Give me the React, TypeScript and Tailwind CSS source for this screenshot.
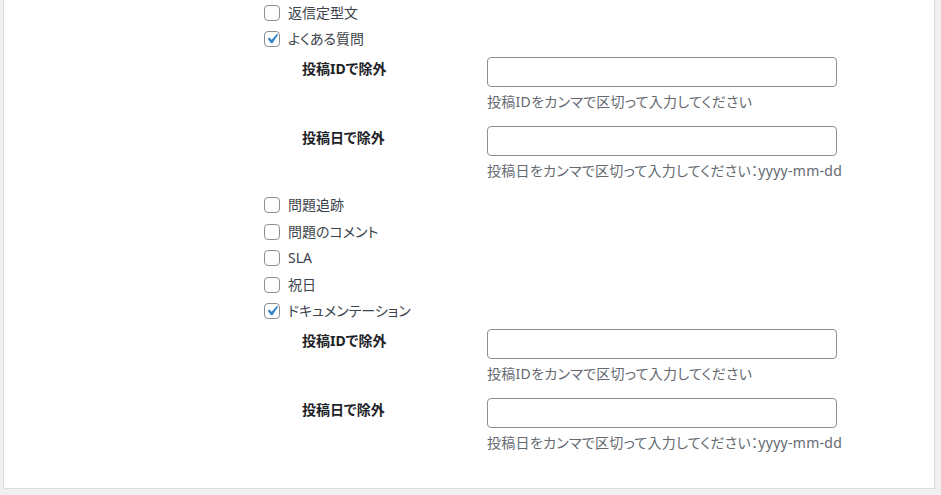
import React from "react";

const font = "[font-family:'Noto_Sans','Noto_Sans_CJK_JP',sans-serif] [font-feature-settings:'palt']";

function Check({ label, checked, h = "h-[26.5px]" }: { label: string; checked?: boolean; h?: string }) {
  return (
    <div className={`flex items-center ${h}`}>
      <span className="relative w-4 h-4 border border-[#8c8f94] rounded-[4px] bg-white shrink-0">
        {checked && (
          <svg viewBox="0 0 20 20" className="absolute -left-[3px] -top-[3px] w-5 h-5">
            <path d="M14.83 4.89l1.34.94-5.81 8.38H9.02L5.78 9.67l1.34-1.25 2.57 2.4z" fill="#3582c4" />
          </svg>
        )}
      </span>
      <span className="ml-2 text-[14px] leading-[20px] text-[#3c434a]">{label}</span>
    </div>
  );
}

function Field({ label, desc, first }: { label: string; desc: string; first?: boolean }) {
  return (
    <div className={`flex ${first ? "" : "mt-[14px]"}`}>
      <div className="w-[223px] pl-[38px] pt-[2px] text-[14px] leading-[20px] font-bold text-[#1d2327] shrink-0">
        {label}
      </div>
      <div className="flex flex-col">
        <div className="w-[350px] h-[30px] border border-[#8c8f94] rounded-[4px] bg-white" />
        <div className="mt-[4px] h-[21px] text-[14px] leading-[21px] tracking-[0.28px] text-[#646970] whitespace-nowrap">{desc}</div>
      </div>
    </div>
  );
}

function Nested() {
  return (
    <div className="mt-[5px]">
      <Field first label="投稿IDで除外" desc="投稿IDをカンマで区切って入力してください" />
      <Field label="投稿日で除外" desc="投稿日をカンマで区切って入力してください：yyyy-mm-dd" />
    </div>
  );
}

export default function App() {
  return (
    <div className={`min-h-screen bg-[#f0f0f1] ${font}`}>
      <div className="ml-[3px] w-[932px] h-[489px] bg-white border-x border-b border-[#dcdcde]">
        <div className="pl-[260px] flex flex-col">
          <Check label="返信定型文" h="h-[26px]" />
          <Check label="よくある質問" checked h="h-[26px]" />
          <Nested />
          <div className="mt-[11px]">
            <Check label="問題追跡" />
            <Check label="問題のコメント" />
            <Check label="SLA" />
            <Check label="祝日" />
            <Check label="ドキュメンテーション" checked />
          </div>
          <div className="-mt-[0.5px]">
            <Nested />
          </div>
        </div>
      </div>
    </div>
  );
}
